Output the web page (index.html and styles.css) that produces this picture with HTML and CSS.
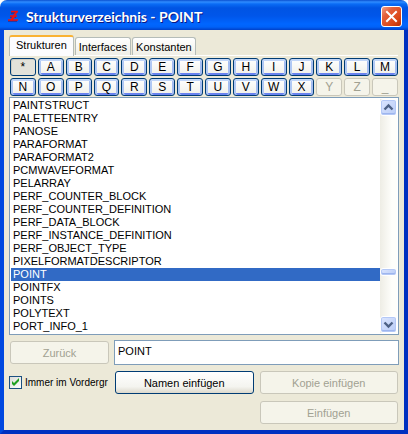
FILE: index.html
```html
<!DOCTYPE html>
<html lang="de">

<head>
    <meta charset="UTF-8">
    <meta name="viewport" content="width=device-width, initial-scale=1.0">
    <title>Strukturverzeichnis - POINT</title>
    <link rel="stylesheet" href="styles.css">
</head>

<body>
    <div class="window">
        <div class="titlebar">
            <svg class="app-icon" viewBox="0 0 16 16" width="16" height="16" aria-hidden="true">
                <path d="M6 5h5M5 9h6M3 13h9" fill="none" stroke="#4a1450" stroke-width="1" />
                <path d="M6 3.5h7M5 8h7M3 12h10" fill="none" stroke="#f01010" stroke-width="1.6" />
                <path d="M12 3.5L8.5 8M9.5 8L6 12" fill="none" stroke="#f01010" stroke-width="2" />
            </svg>
            <h1>Strukturverzeichnis - POINT</h1>
            <button class="close" aria-label="Schließen">
                <svg viewBox="0 0 19 19" width="19" height="19">
                    <path d="M5 5l9 9M14 5l-9 9" stroke="#fff" stroke-width="2" stroke-linecap="square" />
                </svg>
            </button>
        </div>

        <div class="content">
            <div class="tabs" role="tablist">
                <button class="tab active" role="tab" aria-selected="true">Strukturen</button>
                <button class="tab" role="tab" aria-selected="false">Interfaces</button>
                <button class="tab" role="tab" aria-selected="false">Konstanten</button>
            </div>

            <!-- Anfangsbuchstaben -->
            <div class="letters">
                <button class="letter pressed">*</button>
                <button class="letter">A</button>
                <button class="letter">B</button>
                <button class="letter">C</button>
                <button class="letter">D</button>
                <button class="letter">E</button>
                <button class="letter">F</button>
                <button class="letter">G</button>
                <button class="letter">H</button>
                <button class="letter">I</button>
                <button class="letter">J</button>
                <button class="letter">K</button>
                <button class="letter">L</button>
                <button class="letter">M</button>
                <button class="letter">N</button>
                <button class="letter">O</button>
                <button class="letter">P</button>
                <button class="letter">Q</button>
                <button class="letter">R</button>
                <button class="letter">S</button>
                <button class="letter">T</button>
                <button class="letter">U</button>
                <button class="letter">V</button>
                <button class="letter">W</button>
                <button class="letter">X</button>
                <button class="letter" disabled>Y</button>
                <button class="letter" disabled>Z</button>
                <button class="letter" disabled>_</button>
            </div>

            <div class="list-box">
                <select class="list" size="18" aria-label="Strukturen">
                    <option>PAINTSTRUCT</option>
                    <option>PALETTEENTRY</option>
                    <option>PANOSE</option>
                    <option>PARAFORMAT</option>
                    <option>PARAFORMAT2</option>
                    <option>PCMWAVEFORMAT</option>
                    <option>PELARRAY</option>
                    <option>PERF_COUNTER_BLOCK</option>
                    <option>PERF_COUNTER_DEFINITION</option>
                    <option>PERF_DATA_BLOCK</option>
                    <option>PERF_INSTANCE_DEFINITION</option>
                    <option>PERF_OBJECT_TYPE</option>
                    <option>PIXELFORMATDESCRIPTOR</option>
                    <option selected>POINT</option>
                    <option>POINTFX</option>
                    <option>POINTS</option>
                    <option>POLYTEXT</option>
                    <option>PORT_INFO_1</option>
                </select>
                <div class="scrollbar">
                    <button class="scroll-btn" aria-label="Nach oben">
                        <svg viewBox="0 0 15 15" width="15" height="15">
                            <path d="M3.5 9.5l4-4 4 4" fill="none" stroke="#4d6185" stroke-width="2.4" />
                        </svg>
                    </button>
                    <div class="track-before"></div>
                    <div class="thumb"></div>
                    <div class="track-after"></div>
                    <button class="scroll-btn" aria-label="Nach unten">
                        <svg viewBox="0 0 15 15" width="15" height="15">
                            <path d="M3.5 5.5l4 4 4-4" fill="none" stroke="#4d6185" stroke-width="2.4" />
                        </svg>
                    </button>
                </div>
            </div>

            <div class="actions">
                <button class="btn" disabled>Zurück</button>
                <input class="name" type="text" value="POINT" aria-label="Name">
                <label class="check">
                    <input type="checkbox" checked>
                    <span>Immer im Vordergr</span>
                </label>
                <button class="btn">Namen einfügen</button>
                <button class="btn" disabled>Kopie einfügen</button>
                <button class="btn last" disabled>Einfügen</button>
            </div>
        </div>
    </div>
</body>

</html>
```
FILE: styles.css
```css
* {
    margin: 0;
    padding: 0;
    box-sizing: border-box
}

body {
    background: #fff;
    font-family: "Liberation Sans", Arial, sans-serif;
    font-size: 11px;
    color: #000
}

button,
input,
select {
    font: inherit;
    color: inherit
}

.window {
    display: flex;
    flex-direction: column;
    min-height: 100vh;
    background: #ece9d8;
    border-radius: 7px 7px 0 0;
    overflow: hidden
}

/* Titelleiste */
.titlebar {
    display: flex;
    align-items: center;
    height: 30px;
    padding: 2px 6px 0 5px;
    background: linear-gradient(#0a50d0 0, #2f8cff 2px, #0a6cf5 4px, #0054e3 8px, #0056ea 16px, #0066ff 24px, #0062f8 27px, #0040c8 30px)
}

.app-icon {
    margin-right: 5px
}

.titlebar h1 {
    flex: 1;
    font-family: Lato, "Trebuchet MS", sans-serif;
    font-size: 14px;
    font-weight: 700;
    color: #fff;
    text-shadow: 1px 1px 0 #0a1883
}

.close {
    display: flex;
    width: 21px;
    height: 21px;
    border: 1px solid #fff;
    border-radius: 3px;
    background: linear-gradient(135deg, #f0a088 0, #e4603c 30%, #dc4818 70%, #b83008 100%)
}

.content {
    flex: 1;
    padding: 5px 6px 6px;
    border: 4px solid;
    border-color: #0048e0 #0030c0 #0030c0 #0048e0;
    border-top: 0
}

/* Reiter */
.tabs {
    display: flex;
    align-items: flex-end;
    gap: 1px;
    height: 21px;
    margin: 0 0 2px -1px;
    border-bottom: 1px solid #fff
}

.tab {
    height: 18px;
    padding: 0 3px;
    border: 1px solid #b5bcb8;
    border-bottom: 0;
    border-radius: 3px 3px 0 0;
    background: linear-gradient(#fff, #f0efe6)
}

.tab.active {
    height: 21px;
    margin-bottom: -1px;
    padding: 0 6px 3px;
    border-top: 2px solid #f9b233;
    background: #fcfcfe
}

/* Buchstaben */
.letters {
    display: grid;
    grid-template-columns: repeat(14, 1fr);
    gap: 2px;
    margin-bottom: 2px
}

.letter {
    height: 18px;
    border: 1px solid #003c74;
    border-radius: 3px;
    background: linear-gradient(#fff, #f0f0ea);
    box-shadow: inset 0 2px 0 #c2d6f8, inset 2px 0 0 #b0c8f4, inset -2px 0 0 #a4bcf0, inset 0 -2px 0 #6982ee;
    font-size: 12px;
    line-height: 16px
}

.letter.pressed {
    background: #e3e2da;
    box-shadow: inset 1px 1px 0 #cfcdc3
}

.letter:disabled,
.btn:disabled {
    border-color: #c9c7ba;
    background: #f5f4ea;
    box-shadow: none;
    color: #a1a192
}

/* Liste */
.list-box {
    display: flex;
    margin-bottom: 7px;
    padding: 1px 0;
    background: #fff;
    outline: 1px solid #7f9db9
}

.list {
    flex: 1;
    height: 234px;
    margin-left: 1px;
    border: 0;
    outline: 0;
    background: #fff;
    overflow: hidden
}

.list option {
    height: 13px;
    min-height: 13px;
    padding: 0 2px;
    line-height: 13px
}

.list option:checked {
    background: #316ac5 linear-gradient(#316ac5, #316ac5);
    color: #fff
}

.scrollbar {
    display: flex;
    flex-direction: column;
    width: 17px;
    margin-right: 1px;
    background: linear-gradient(90deg, #eeede5, #fefefb 70%)
}

.scroll-btn,
.thumb {
    border: 1px solid #fff;
    border-radius: 3px;
    background: linear-gradient(135deg, #dce6ff, #b8cbf6);
    box-shadow: inset 0 0 0 1px #b4c8f6, inset 0 -1px 0 1px #9db5ee
}

.scroll-btn {
    display: flex;
    height: 17px
}

.thumb {
    height: 8px
}

.track-before {
    flex: 152
}

.track-after {
    flex: 40
}

/* Eingabe und Schaltflächen */
.actions {
    display: grid;
    grid-template-columns: 99px 1fr 1fr;
    gap: 7px 6px
}

.btn {
    height: 23px;
    border: 1px solid #003c74;
    border-radius: 3px;
    background: linear-gradient(#fff, #f4f4ef 70%, #dcd8cc)
}

.name {
    grid-column: span 2;
    min-width: 0;
    padding: 0 3px 4px;
    border: 0;
    outline: 1px solid #7f9db9;
    background: #fff
}

.check {
    display: flex;
    align-items: center;
    gap: 3px;
    margin-left: -1px;
    font-size: 10px;
    white-space: nowrap
}

.check input {
    flex: none;
    appearance: none;
    width: 13px;
    height: 13px;
    border: 1px solid #1c5180;
    background: linear-gradient(135deg, #dcdcd7, #fff)
}

.check input:checked::before {
    content: '';
    display: block;
    width: 11px;
    height: 11px;
    background: #21a121;
    clip-path: polygon(2px 4px, 4px 6px, 9px 1px, 9px 4px, 4px 9px, 2px 7px)
}

.last {
    grid-column: 3
}
```
